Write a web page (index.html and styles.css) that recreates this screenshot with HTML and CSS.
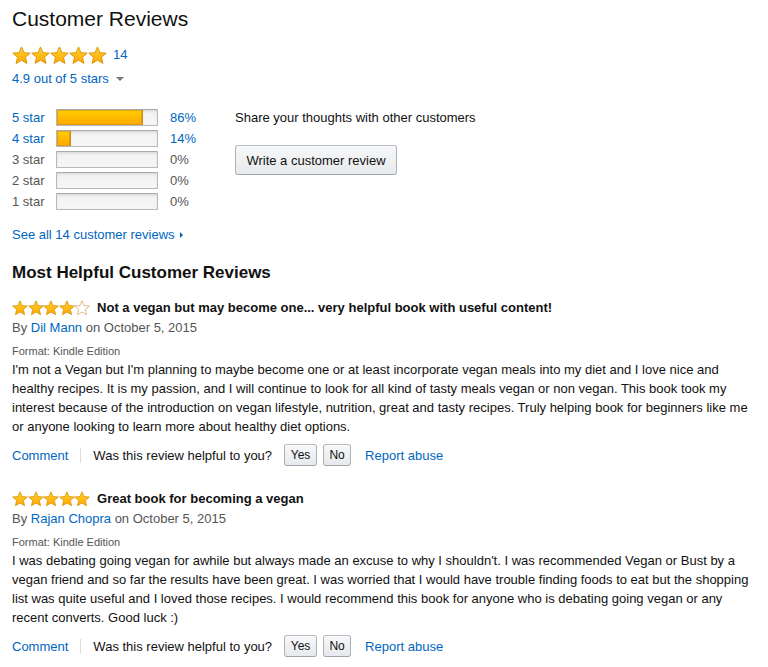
FILE: index.html
```html
<!DOCTYPE html>
<html>
<head>
<meta charset="utf-8">
<link rel="stylesheet" href="styles.css">
</head>
<body>
<svg width="0" height="0" class="defs">
  <defs>
    <linearGradient id="gold" x1="0" y1="0" x2="0" y2="1">
      <stop offset="0" stop-color="#ffd530"/>
      <stop offset="1" stop-color="#ffa500"/>
    </linearGradient>
    <symbol id="star" viewBox="0 0 20 20">
      <polygon points="10,1 12.6,7 19.2,7.5 14.2,11.9 15.7,18.4 10,15 4.3,18.4 5.8,11.9 0.8,7.5 7.4,7" fill="url(#gold)" stroke="#d8930d" stroke-width="1" stroke-linejoin="round"/>
    </symbol>
    <symbol id="star-empty" viewBox="0 0 20 20">
      <polygon points="10,1 12.6,7 19.2,7.5 14.2,11.9 15.7,18.4 10,15 4.3,18.4 5.8,11.9 0.8,7.5 7.4,7" fill="#fff" stroke="#d7ab6a" stroke-width="1" stroke-linejoin="round"/>
    </symbol>
  </defs>
</svg>

<h1 class="title">Customer Reviews</h1>

<div class="summary-stars">
  <span class="stars stars-lg">
    <svg><use href="#star"/></svg><svg><use href="#star"/></svg><svg><use href="#star"/></svg><svg><use href="#star"/></svg><svg><use href="#star"/></svg>
  </span>
  <a class="link count">14</a>
</div>
<div class="avg"><a class="link">4.9 out of 5 stars</a><span class="caret"></span></div>

<div class="overview">
  <div class="histogram">
    <a class="link hlabel">5 star</a><div class="bar"><div class="fill" style="width:86%"></div></div><a class="link hpct">86%</a>
    <a class="link hlabel">4 star</a><div class="bar"><div class="fill" style="width:14%"></div></div><a class="link hpct">14%</a>
    <span class="hlabel muted">3 star</span><div class="bar"></div><span class="hpct muted">0%</span>
    <span class="hlabel muted">2 star</span><div class="bar"></div><span class="hpct muted">0%</span>
    <span class="hlabel muted">1 star</span><div class="bar"></div><span class="hpct muted">0%</span>
  </div>
  <div class="share">
    <p class="share-text">Share your thoughts with other customers</p>
    <button class="btn btn-write">Write a customer review</button>
  </div>
</div>

<div class="see-all"><a class="link">See all 14 customer reviews</a><span class="arrow"></span></div>

<h2 class="helpful-title">Most Helpful Customer Reviews</h2>

<div class="review">
  <div class="review-head">
    <span class="stars stars-sm">
      <svg><use href="#star"/></svg><svg><use href="#star"/></svg><svg><use href="#star"/></svg><svg><use href="#star"/></svg><svg><use href="#star-empty"/></svg>
    </span>
    <span class="review-title">Not a vegan but may become one... very helpful book with useful content!</span>
  </div>
  <div class="byline">By <a class="link">Dil Mann</a> on October 5, 2015</div>
  <div class="format">Format: Kindle Edition</div>
  <p class="review-body">I'm not a Vegan but I'm planning to maybe become one or at least incorporate vegan meals into my diet and I love nice and healthy recipes. It is my passion, and I will continue to look for all kind of tasty meals vegan or non vegan. This book took my interest because of the introduction on vegan lifestyle, nutrition, great and tasty recipes. Truly helping book for beginners like me or anyone looking to learn more about healthy diet options.</p>
  <div class="actions">
    <a class="link">Comment</a>
    <span class="sep"></span>
    <span class="ask">Was this review helpful to you?</span>
    <button class="btn btn-small btn-yes">Yes</button>
    <button class="btn btn-small btn-no">No</button>
    <a class="link report">Report abuse</a>
  </div>
</div>

<div class="review">
  <div class="review-head">
    <span class="stars stars-sm">
      <svg><use href="#star"/></svg><svg><use href="#star"/></svg><svg><use href="#star"/></svg><svg><use href="#star"/></svg><svg><use href="#star"/></svg>
    </span>
    <span class="review-title">Great book for becoming a vegan</span>
  </div>
  <div class="byline">By <a class="link">Rajan Chopra</a> on October 5, 2015</div>
  <div class="format">Format: Kindle Edition</div>
  <p class="review-body">I was debating going vegan for awhile but always made an excuse to why I shouldn't. I was recommended Vegan or Bust by a vegan friend and so far the results have been great. I was worried that I would have trouble finding foods to eat but the shopping list was quite useful and I loved those recipes. I would recommend this book for anyone who is debating going vegan or any recent converts. Good luck :)</p>
  <div class="actions">
    <a class="link">Comment</a>
    <span class="sep"></span>
    <span class="ask">Was this review helpful to you?</span>
    <button class="btn btn-small btn-yes">Yes</button>
    <button class="btn btn-small btn-no">No</button>
    <a class="link report">Report abuse</a>
  </div>
</div>
</body>
</html>
```

FILE: styles.css
```css
* { box-sizing: border-box; }

body {
  margin: 0;
  padding: 0 12px;
  font-family: "Liberation Sans", Arial, sans-serif;
  font-size: 13px;
  line-height: 19px;
  color: #111;
  background: #fff;
}

.defs { position: absolute; width: 0; height: 0; }

.link { color: #0066c0; text-decoration: none; }
.muted { color: #555; }

.title {
  margin: 5px 0 0;
  font-size: 21px;
  line-height: 27px;
  font-weight: normal;
  color: #111;
}

.summary-stars {
  margin-top: 14px;
  display: flex;
  align-items: center;
  height: 18px;
}

.stars { display: inline-flex; }
.stars svg { display: block; }
.stars-lg svg { width: 19px; height: 19px; }
.stars-sm svg { width: 16px; height: 16px; margin-right: -0.4px; }

.count { margin-left: 6px; line-height: 18px; }

.avg {
  margin-top: 5px;
  display: flex;
  align-items: center;
}
.caret {
  margin-left: 7px;
  width: 0; height: 0;
  border-left: 4px solid transparent;
  border-right: 4px solid transparent;
  border-top: 4px solid #777;
  margin-top: 1px;
}

.overview {
  margin-top: 19px;
  display: flex;
}

.histogram {
  display: grid;
  grid-template-columns: 44px 102px 77px;
  grid-auto-rows: 21px;
  align-items: center;
}
.hlabel { line-height: 21px; }
.hpct { padding-left: 12px; line-height: 21px; }

.bar {
  height: 17px;
  border: 1px solid #b8b8b8;
  border-top-color: #aaa;
  border-radius: 1px;
  background: linear-gradient(#e9e9e9, #f3f3f3 30%, #f6f6f6);
  box-shadow: inset 0 1px 2px rgba(0,0,0,.08);
  overflow: hidden;
  display: flex;
}
.fill {
  height: 100%;
  background: linear-gradient(#ffce00, #ffa700);
  border-right: 1px solid #c88b1f;
  box-shadow: inset 0 0 0 1px rgba(200,140,30,.55);
}

.share-text { margin: 0; line-height: 21px; }

.btn {
  font-family: "Liberation Sans", Arial, sans-serif;
  color: #111;
  border: 1px solid #adb1b8;
  border-top-color: #b8bcc2;
  border-bottom-color: #a2a6ac;
  border-radius: 3px;
  background: linear-gradient(#f7f8fa, #e7e9ec);
  box-shadow: inset 0 1px 0 rgba(255,255,255,.6);
  padding: 0;
  cursor: pointer;
}
.btn-write {
  margin-top: 17px;
  width: 162px;
  height: 30px;
  font-size: 13px;
}

.see-all {
  margin-top: 13px;
  display: flex;
  align-items: center;
}
.arrow {
  margin-left: 5px;
  width: 0; height: 0;
  border-top: 3px solid transparent;
  border-bottom: 3px solid transparent;
  border-left: 3px solid #0066c0;
}

.helpful-title {
  margin: 17px 0 0;
  font-size: 17px;
  line-height: 24px;
  font-weight: bold;
  color: #111;
}

.review { margin-top: 13px; }
.review + .review { margin-top: 22px; }

.review-head {
  display: flex;
  align-items: center;
  height: 19px;
}
.review-title {
  margin-left: 7px;
  font-weight: bold;
}

.byline { color: #555; margin-top: 1px; }

.format {
  margin-top: 7px;
  font-size: 11px;
  line-height: 15px;
  color: #555;
}

.review-body { margin: 1px 0 0; }

.actions {
  margin-top: 7px;
  display: flex;
  align-items: center;
  height: 24px;
}
.sep {
  width: 1px;
  height: 15px;
  background: #ddd;
  margin: 0 12px;
}
.btn-small {
  height: 22px;
  font-size: 12px;
  line-height: 20px;
}
.btn-yes { width: 33px; margin-left: 12px; }
.btn-no { width: 28px; margin-left: 6px; }
.report { margin-left: 14px; }
```
